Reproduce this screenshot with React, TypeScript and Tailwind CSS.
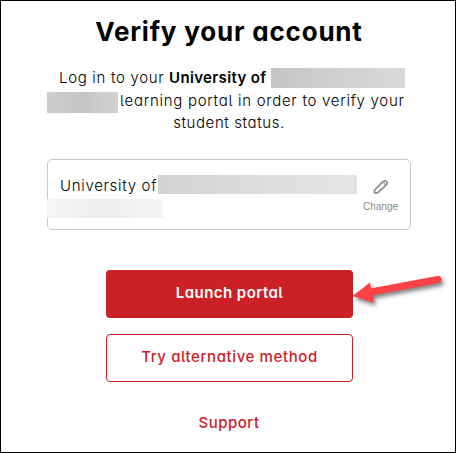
const RedactedName = ({ className }: { className: string }) => (
    <span aria-hidden="true" className={`block shrink-0 ${className}`} />
);

const PencilIcon = () => (
    <svg width="16" height="16" viewBox="0 0 16 16" fill="none" stroke="#8b8b8b" strokeWidth="1.7" strokeLinejoin="round">
        <path d="M1.4 14 Q1.2 11.8 2.2 10.5 L9.9 2.6 Q11.7 1.1 13.3 2.4 Q14.8 4 13.4 5.8 L5.5 13.2 Q3.8 14.4 1.4 14 Z" />
        <path d="M10.6 4.2 L12 5.6" />
    </svg>
);

const PointerArrow = () => (
    <svg
        className="absolute left-[245px] top-0 overflow-visible drop-shadow-[2px_3px_2px_rgba(0,0,0,0.5)]"
        width="96"
        height="40"
        viewBox="0 0 96 40"
    >
        <path d="M20 22 L87 9.5" stroke="#fb4345" strokeWidth="7" strokeLinecap="round" />
        <path d="M1.5 26 L19 12.5 L23 32.7 Z" fill="#fb4345" />
    </svg>
);

const App = () => {
    return (
        <div className="h-[453px] w-[456px] border border-black bg-white pl-[46px] pr-[44px] font-[Inter,'Open_Sans',sans-serif] text-[15px] text-black [font-feature-settings:'cv11','cv05']">
            <h1 className="mt-[14px] flex h-8 items-center justify-center whitespace-nowrap text-[26px] font-bold tracking-[0.8px]">
                Verify your account
            </h1>

            <div className="mt-[20px] whitespace-nowrap font-light">
                <div className="flex h-[23px] items-start pl-[12px]">
                    <span className="w-[110px] tracking-[0.68px]">Log in to your</span>
                    <strong className="w-[102px] font-semibold tracking-[0.35px]">University of</strong>
                    <RedactedName className="mt-px h-5 w-[134px] bg-linear-to-r from-[#c5c5c4] via-[#d0d0d1] to-[#d9d9da]" />
                </div>
                <div className="flex h-[23px] items-start">
                    <RedactedName className="mt-[2px] h-[21px] w-[71px] bg-linear-to-r from-[#cdcdcd] via-[#c5c5c3] to-[#d2d2d3]" />
                    <span className="ml-[2px] tracking-[0.72px]">learning portal in order to verify your</span>
                </div>
                <div className="flex h-[21px] items-center justify-center tracking-[0.6px]">student status.</div>
            </div>

            <div className="mt-[25px] flex h-[71px] w-[364px] rounded-[5px] border border-[#c8c8c8]">
                <div className="w-[310px] pt-[15px]">
                    <div className="flex h-[19px] items-center pl-[12px]">
                        <span className="w-[98px] whitespace-nowrap pt-[3px] font-light tracking-[0.68px]">University of</span>
                        <RedactedName className="h-[19px] w-[199px] bg-linear-to-r from-[#d3d3d3] via-[#dcdddc] to-[#e5e5e5]" />
                    </div>
                    <RedactedName className="-ml-px mt-[5px] h-[19px] w-[116px] bg-linear-to-r from-[#f5f5f5] via-[#ededed] to-[#f5f5f5]" />
                </div>
                <button className="ml-[5px] flex w-[35px] flex-col items-center pt-[19px] font-['Liberation_Sans',Arial,sans-serif] text-[10px] leading-3 text-[#8b8b8b]">
                    <PencilIcon />
                    <span className="mt-[6px]">Change</span>
                </button>
            </div>

            <div className="relative ml-[59px] mt-10 flex w-[247px] flex-col gap-4">
                <button className="h-12 rounded-[4px] bg-[#cc2027] pb-[2px] font-semibold tracking-[0.45px] text-white">
                    Launch portal
                </button>
                <button className="h-12 rounded-[4px] border border-[#cc2027] pb-px font-medium tracking-[0.6px] text-[#cc2027]">
                    Try alternative method
                </button>
                <PointerArrow />
            </div>

            <div className="mt-[29px] flex h-6 items-center justify-center font-medium tracking-[0.5px] text-[#cc2027]">
                <a href="#">Support</a>
            </div>
        </div>
    );
};

export default App;
